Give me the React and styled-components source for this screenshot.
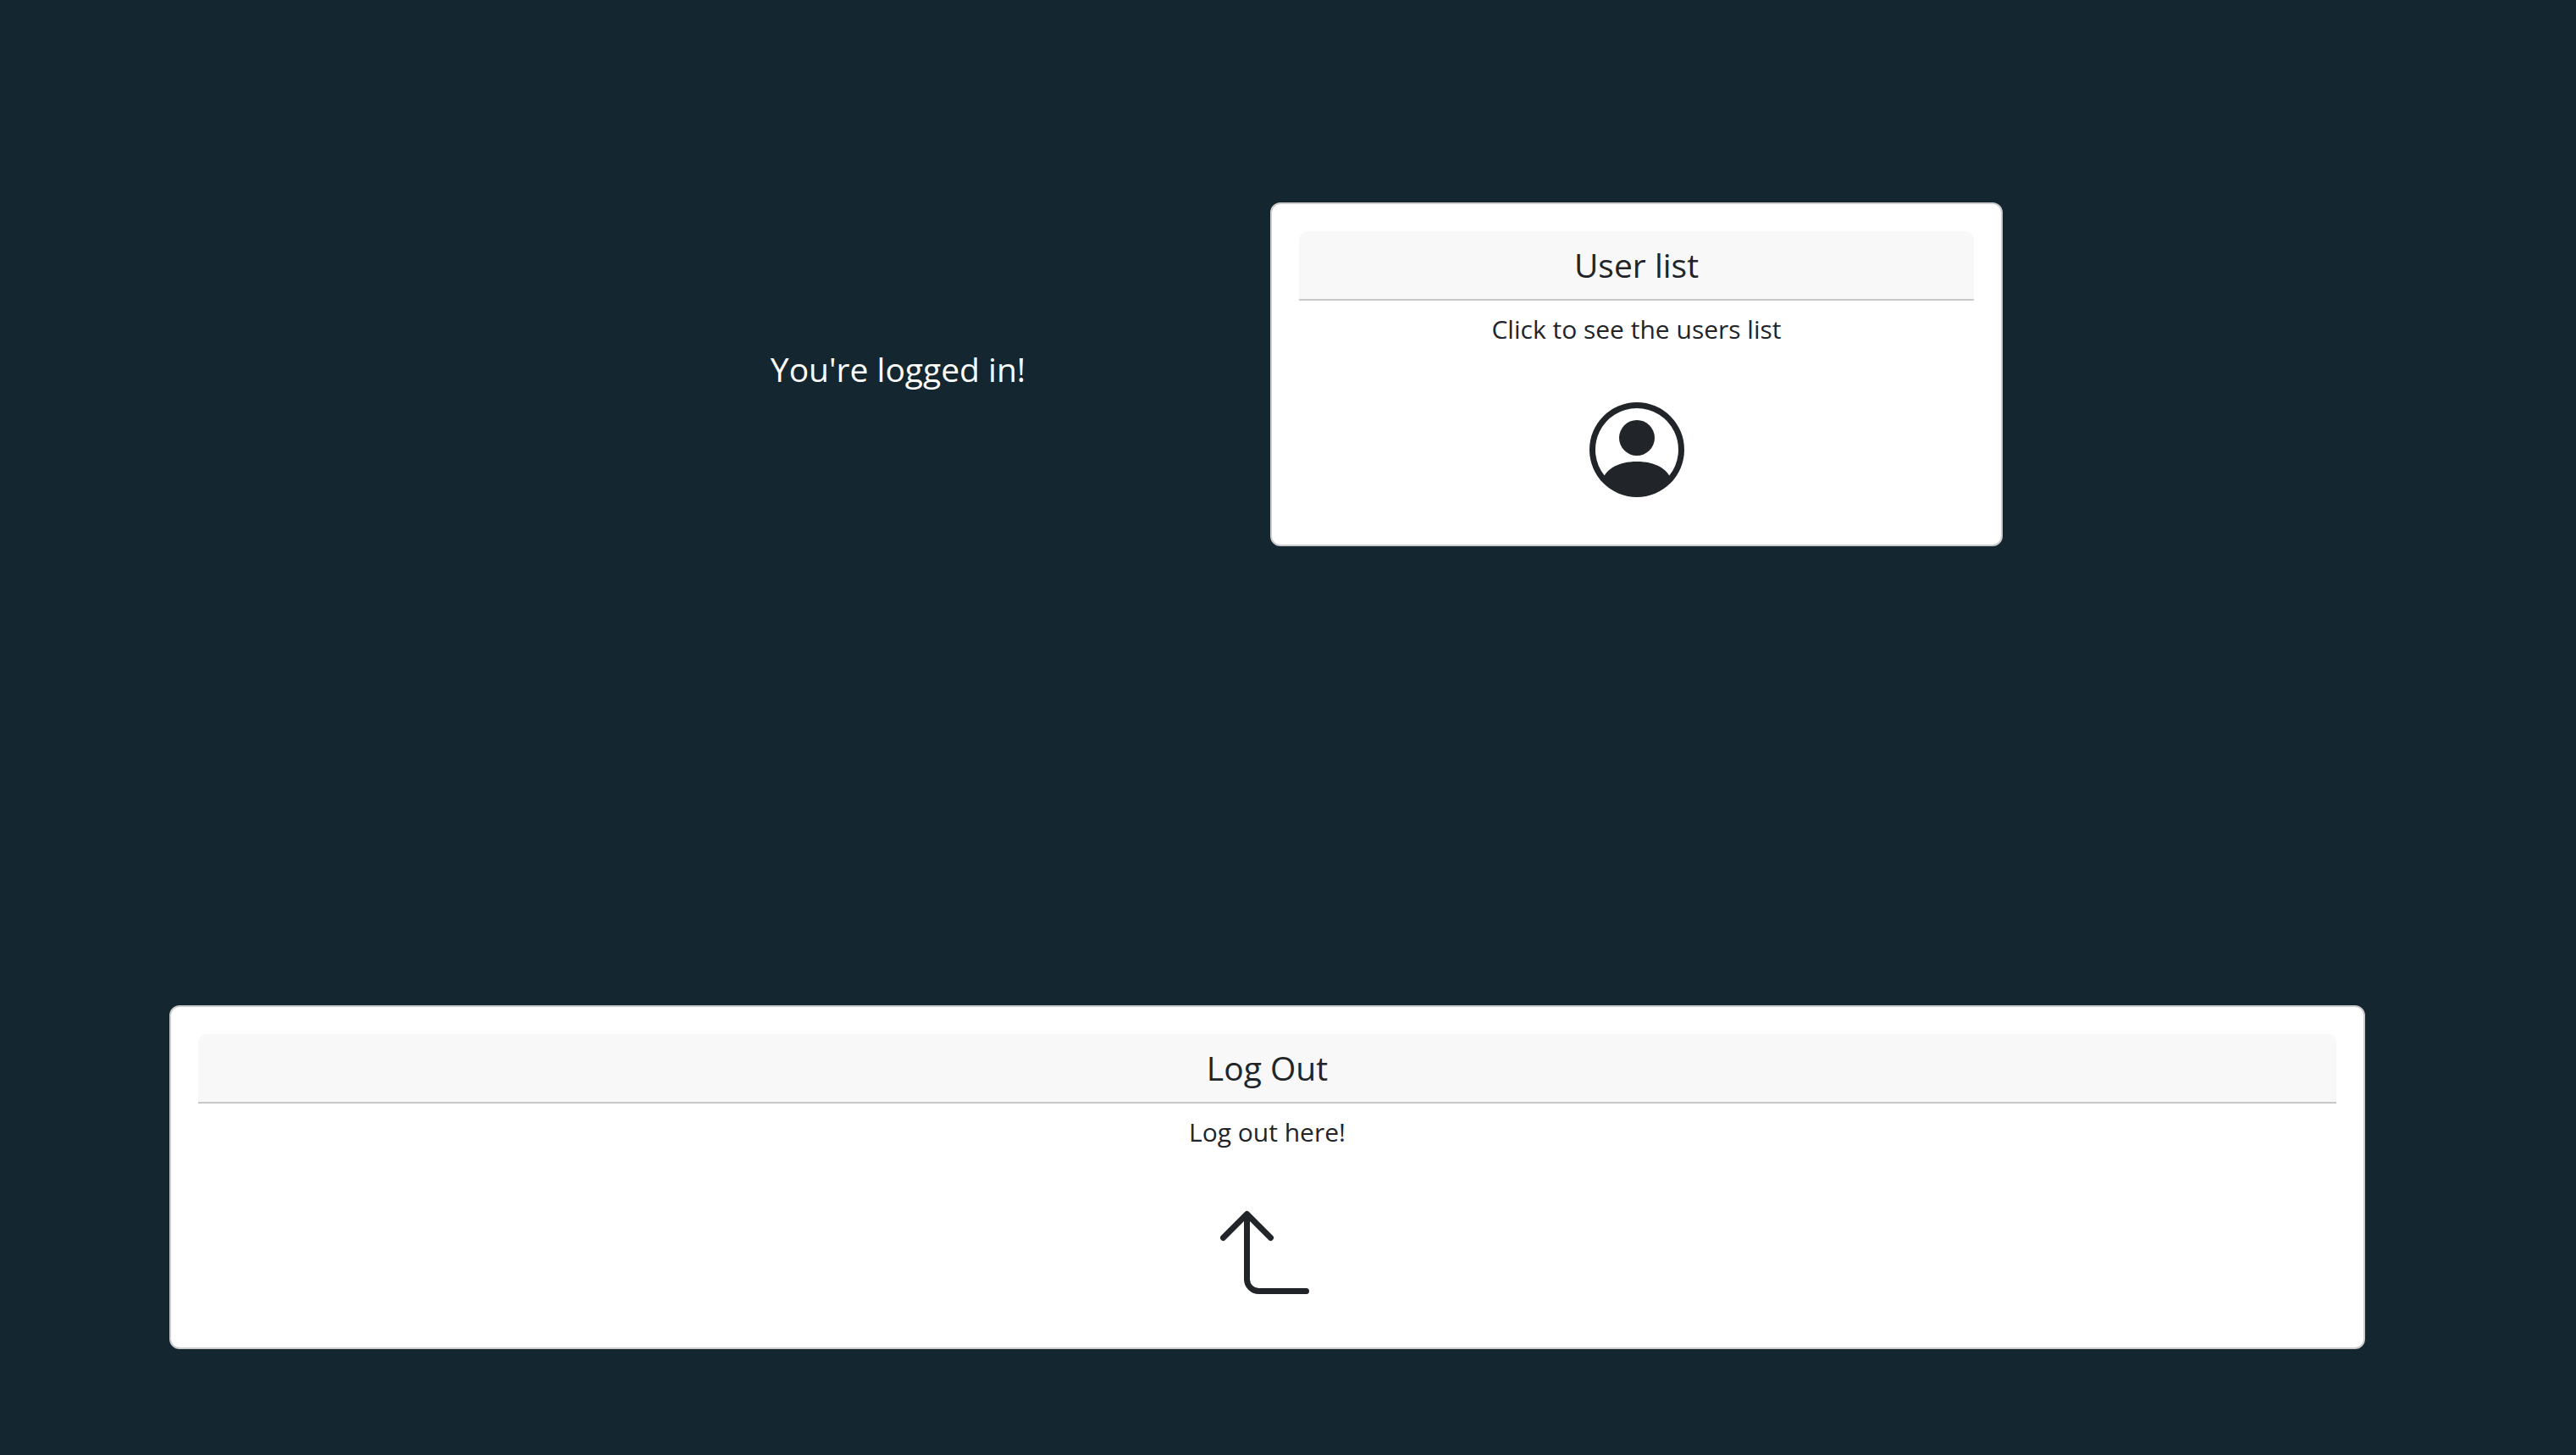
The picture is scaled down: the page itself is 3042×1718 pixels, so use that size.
import React from "react";
import styled, { createGlobalStyle } from "styled-components";

const GlobalStyle = createGlobalStyle`
  *, *::before, *::after { box-sizing: border-box; }
  body {
    margin: 0;
    background: #14262f;
    color: #212529;
    font-family: "Open Sans", "Noto Sans", sans-serif;
    font-size: 30px;
    line-height: 48px;
  }
`;

const Page = styled.main`
  min-height: 100vh;
  display: flex;
  flex-direction: column;
  justify-content: space-between;
  padding: 239px 249px 125px 200px;
`;

const Welcome = styled.section`
  display: flex;
  justify-content: center;
  align-items: center;
  padding-left: 7px;
`;

const Greeting = styled.h1`
  flex: 0 0 865px;
  margin: 0;
  padding: 0 14px 13px 0;
  color: #fff;
  font-size: 39px;
  font-weight: 400;
  line-height: 48px;
  text-align: center;
`;

const Card = styled.button`
  display: flex;
  flex-direction: column;
  flex: ${(p) => (p.$half ? "0 0 865px" : "none")};
  padding: 32px;
  border: 2px solid #ccc;
  border-radius: 12px;
  background: #fff;
  color: inherit;
  font: inherit;
  text-align: center;
  cursor: pointer;
`;

const CardTitle = styled.span`
  width: 100%;
  padding: 16px 32px;
  border-bottom: 2px solid #c8c8c8;
  border-radius: 10px 10px 0 0;
  background: #f8f8f8;
  font-size: 39px;
  line-height: 48px;
`;

const CardText = styled.span`
  width: 100%;
  padding: 10px 0 32px;
`;

const CardIcon = styled.svg`
  align-self: center;
  width: 112px;
  height: 112px;
  margin: 30px 0 24px;
  fill: currentColor;
`;

function PersonIcon() {
  return (
    <CardIcon viewBox="0 0 16 16" aria-hidden="true">
      <path d="M11 6a3 3 0 1 1-6 0 3 3 0 0 1 6 0z" />
      <path
        fillRule="evenodd"
        d="M0 8a8 8 0 1 1 16 0A8 8 0 0 1 0 8zm8-7a7 7 0 0 0-5.468 11.37C3.242 11.226 4.805 10 8 10s4.757 1.225 5.468 2.37A7 7 0 0 0 8 1z"
      />
    </CardIcon>
  );
}

function ArrowIcon() {
  return (
    <CardIcon viewBox="0 0 16 16" aria-hidden="true">
      <path
        fillRule="evenodd"
        d="M4.854 1.146a.5.5 0 0 0-.708 0l-4 4a.5.5 0 1 0 .708.708L4 2.707V12.500A2.500 2.500 0 0 0 6.500 15h8a.5.5 0 0 0 0-1h-8A1.500 1.500 0 0 1 5 12.500V2.707l3.146 3.147a.5.5 0 1 0 .708-.708l-4-4z"
      />
    </CardIcon>
  );
}

export default function App() {
  return (
    <>
      <GlobalStyle />
      <Page>
        <Welcome>
          <Greeting>You're logged in!</Greeting>
          <Card type="button" $half>
            <CardTitle>User list</CardTitle>
            <CardText>Click to see the users list</CardText>
            <PersonIcon />
          </Card>
        </Welcome>
        <Card type="button">
          <CardTitle>Log Out</CardTitle>
          <CardText>Log out here!</CardText>
          <ArrowIcon />
        </Card>
      </Page>
    </>
  );
}
